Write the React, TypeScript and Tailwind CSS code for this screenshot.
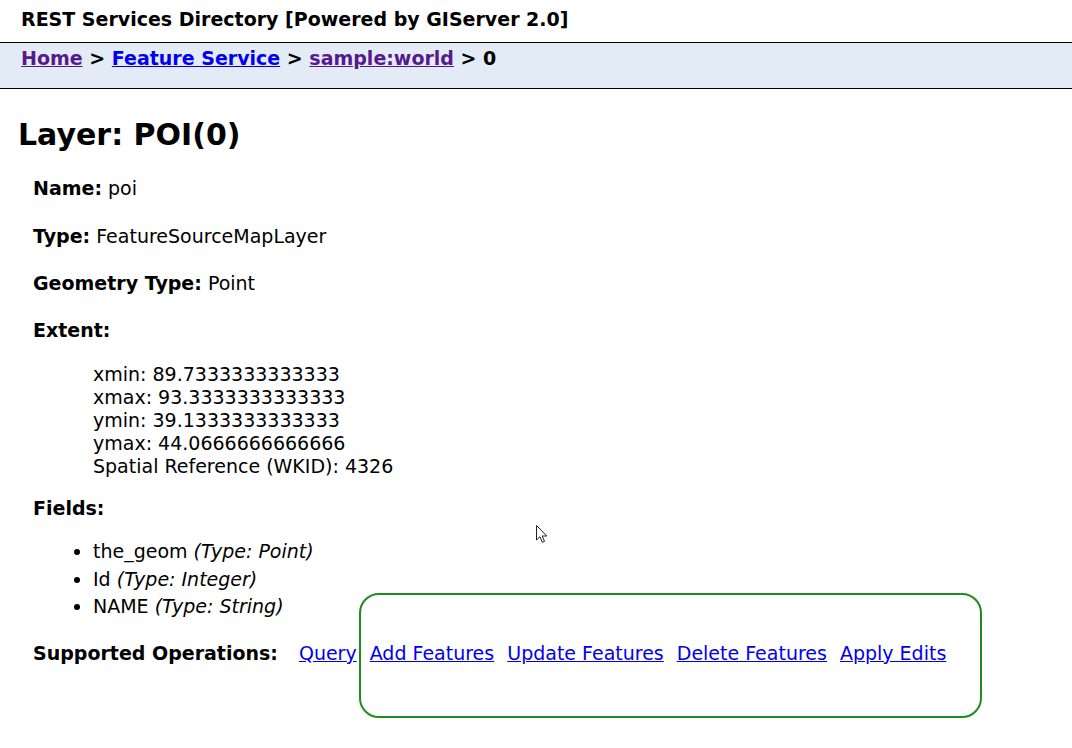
import React from "react";

const font = { fontFamily: '"DejaVu Sans", Verdana, sans-serif' };

export default function App() {
  const ops = ["Add Features", "Update Features", "Delete Features", "Apply Edits"];
  return (
    <div className="relative w-[1072px] h-[748px] bg-white text-black overflow-hidden" style={font}>
      <div className="h-[42px] pl-[21px] pt-[8px] text-[19px] leading-[23px] font-bold">
        REST Services Directory [Powered by GIServer 2.0]
      </div>
      <div className="h-[47px] border-t border-b border-black bg-[#e3ecf6] pl-[21px] pt-[4px] text-[19px] leading-[23px] font-bold">
        <a className="text-[#551a8b] underline" href="#">Home</a>
        <span> &gt; </span>
        <a className="text-[#0000ee] underline" href="#">Feature Service</a>
        <span> &gt; </span>
        <a className="text-[#551a8b] underline" href="#">sample:world</a>
        <span> &gt; 0</span>
      </div>

      <h2 className="mt-[29px] pl-[18px] text-[30px] leading-[34px] font-bold">Layer: POI(0)</h2>

      <div className="pl-[33px] text-[19px] leading-[23px]">
        <div className="mt-[25px]"><b>Name:</b> poi</div>
        <div className="mt-[25px]"><b>Type:</b> FeatureSourceMapLayer</div>
        <div className="mt-[24px]"><b>Geometry Type:</b> Point</div>
        <div className="mt-[24px] font-bold">Extent:</div>
        <div className="mt-[21px] pl-[60px]">
          <div>xmin: 89.7333333333333</div>
          <div>xmax: 93.3333333333333</div>
          <div>ymin: 39.1333333333333</div>
          <div>ymax: 44.0666666666666</div>
          <div>Spatial Reference (WKID): 4326</div>
        </div>
        <div className="mt-[19px] font-bold">Fields:</div>
        <ul className="mt-[20px] pl-[60px] list-disc">
          <li className="mt-[4.5px] leading-[23px]">the_geom <i>(Type: Point)</i></li>
          <li className="mt-[4.5px] leading-[23px]">Id <i>(Type: Integer)</i></li>
          <li className="mt-[4.5px] leading-[23px]">NAME <i>(Type: String)</i></li>
        </ul>
        <div className="mt-[24px] flex items-baseline">
          <b>Supported Operations:</b>
          <a className="ml-[21px] text-[#0000ee] underline" href="#">Query</a>
          {ops.map((o) => (
            <a key={o} className="ml-[13px] text-[#0000ee] underline" href="#">{o}</a>
          ))}
        </div>
      </div>

      <div className="absolute left-[359px] top-[593px] w-[623px] h-[125px] border-2 border-[#1e8c1e] rounded-[20px]" />

      <svg className="absolute left-[536px] top-[525px]" width="12" height="19" viewBox="0 0 12 19">
        <path d="M0.5 0.5 L0.5 15 L4 11.8 L6.3 17.3 L8.5 16.4 L6.2 11 L10.8 11 Z" fill="white" stroke="#222" strokeWidth="1" strokeLinejoin="round" />
      </svg>
    </div>
  );
}
